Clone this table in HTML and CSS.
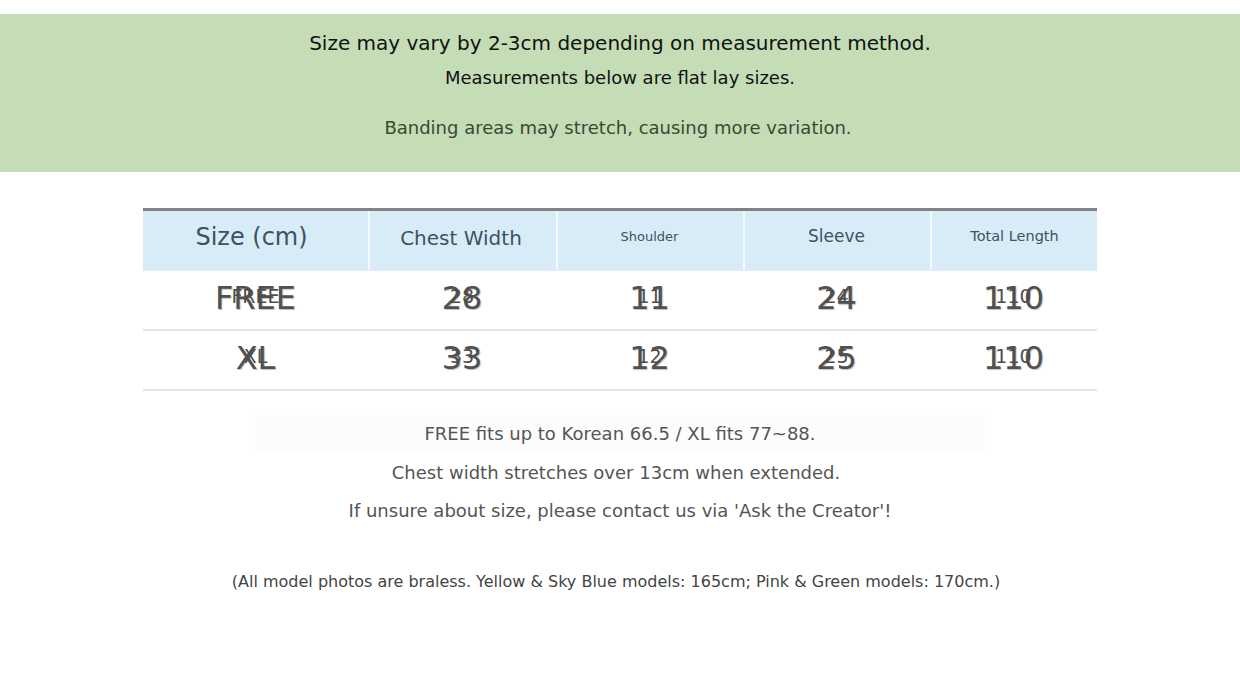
FILE: index.html
```html
<!DOCTYPE html>
<html>
<head>
<meta charset="utf-8">
<link rel="stylesheet" href="styles.css">
</head>
<body>
<div class="page">
  <section class="notice">
    <p class="n1">Size may vary by 2-3cm depending on measurement method.</p>
    <p class="n2">Measurements below are flat lay sizes.</p>
    <p class="n3">Banding areas may stretch, causing more variation.</p>
  </section>

  <div class="table">
    <div class="row head">
      <div class="cell c1"><span class="h-size">Size (cm)</span></div>
      <div class="cell c2"><span class="h-chest">Chest Width</span></div>
      <div class="cell c3"><span class="h-shoulder">Shoulder</span></div>
      <div class="cell c4"><span class="h-sleeve">Sleeve</span></div>
      <div class="cell c5"><span class="h-total">Total Length</span></div>
    </div>
    <div class="row body">
      <div class="cell c1"><span class="big">FREE</span><span class="small">FREE</span></div>
      <div class="cell c2"><span class="big">28</span><span class="small">28</span></div>
      <div class="cell c3"><span class="big">11</span><span class="small">11</span></div>
      <div class="cell c4"><span class="big">24</span><span class="small">24</span></div>
      <div class="cell c5"><span class="big">110</span><span class="small">110</span></div>
    </div>
    <div class="row body">
      <div class="cell c1"><span class="big">XL</span><span class="small">XL</span></div>
      <div class="cell c2"><span class="big">33</span><span class="small">33</span></div>
      <div class="cell c3"><span class="big">12</span><span class="small">12</span></div>
      <div class="cell c4"><span class="big">25</span><span class="small">25</span></div>
      <div class="cell c5"><span class="big">110</span><span class="small">110</span></div>
    </div>
  </div>

  <section class="notes">
    <p class="fit">FREE fits up to Korean 66.5 / XL fits 77~88.</p>
    <p class="stretch">Chest width stretches over 13cm when extended.</p>
    <p>If unsure about size, please contact us via 'Ask the Creator'!</p>
  </section>

  <p class="models">(All model photos are braless. Yellow &amp; Sky Blue models: 165cm; Pink &amp; Green models: 170cm.)</p>
</div>
</body>
</html>
```

FILE: styles.css
```css
* { box-sizing: border-box; }

html, body {
  margin: 0;
  padding: 0;
  background: #ffffff;
}

body {
  font-family: "DejaVu Sans", "Noto Sans", sans-serif;
  width: 1240px;
  height: 690px;
  overflow: hidden;
}

p { margin: 0; }

.page {
  padding-top: 14px;
}

.notice {
  background: #c4ddb7;
  height: 158px;
  padding-top: 17px;
  display: flex;
  flex-direction: column;
  align-items: center;
  text-align: center;
}

.n1 {
  font-size: 20px;
  line-height: 24px;
  color: #111;
}

.n2 {
  font-size: 18px;
  line-height: 22px;
  color: #111;
  margin-top: 12px;
}

.n3 {
  font-size: 18px;
  line-height: 22px;
  color: #3a4934;
  margin-top: 28px;
  padding-right: 4px;
}

.table {
  width: 954px;
  margin: 36px auto 0;
  border-top: 3px solid #7f8386;
}

.row {
  display: grid;
  grid-template-columns: 225px 188px 187px 187px 167px;
}

.row.head {
  height: 60px;
  background: #d8ecf8;
  border-bottom: 1px solid #e6eef3;
}

.row.head .cell {
  display: flex;
  align-items: center;
  justify-content: center;
  color: #405163;
  padding-bottom: 8px;
}

.row.head .cell + .cell {
  border-left: 2px solid #f3f9fc;
}

.row.head .c1 { padding-right: 8px; }
.row.head .c2 { padding-right: 4px; }
.row.head .c3, .row.head .c4 { padding-right: 2px; }

.h-size { font-size: 24px; }
.h-chest { font-size: 20px; padding-top: 2px; }
.h-shoulder { font-size: 13px; }
.h-sleeve { font-size: 17px; padding-bottom: 2px; }
.h-total { font-size: 14.5px; padding-bottom: 2px; }

.row.body {
  height: 60px;
  border-bottom: 2px solid #e4e4e4;
}

.row.body .cell {
  position: relative;
  display: flex;
  align-items: center;
  justify-content: center;
}

.big {
  font-size: 32px;
  line-height: 40px;
  color: #505050;
  text-shadow: 1px 1px 1px rgba(0,0,0,0.25);
  padding-bottom: 5px;
}

.small {
  position: absolute;
  left: 0;
  right: 0;
  top: 13px;
  text-align: center;
  font-size: 19px;
  line-height: 24px;
  color: #4e4e4e;
}

.notes {
  margin-top: 31px;
  display: flex;
  flex-direction: column;
  align-items: center;
  color: #555;
  font-size: 18px;
  line-height: 24px;
}

.notes p + p { margin-top: 14.5px; }

.stretch { padding-right: 8px; }

.fit {
  width: 730px;
  text-align: center;
  background: #fcfcfc;
  padding: 7px 0;
  margin-bottom: -7px;
  margin-top: -7px;
}

.models {
  margin-top: 49px;
  padding-right: 8px;
  text-align: center;
  font-size: 16px;
  line-height: 20px;
  color: #444;
}
```
